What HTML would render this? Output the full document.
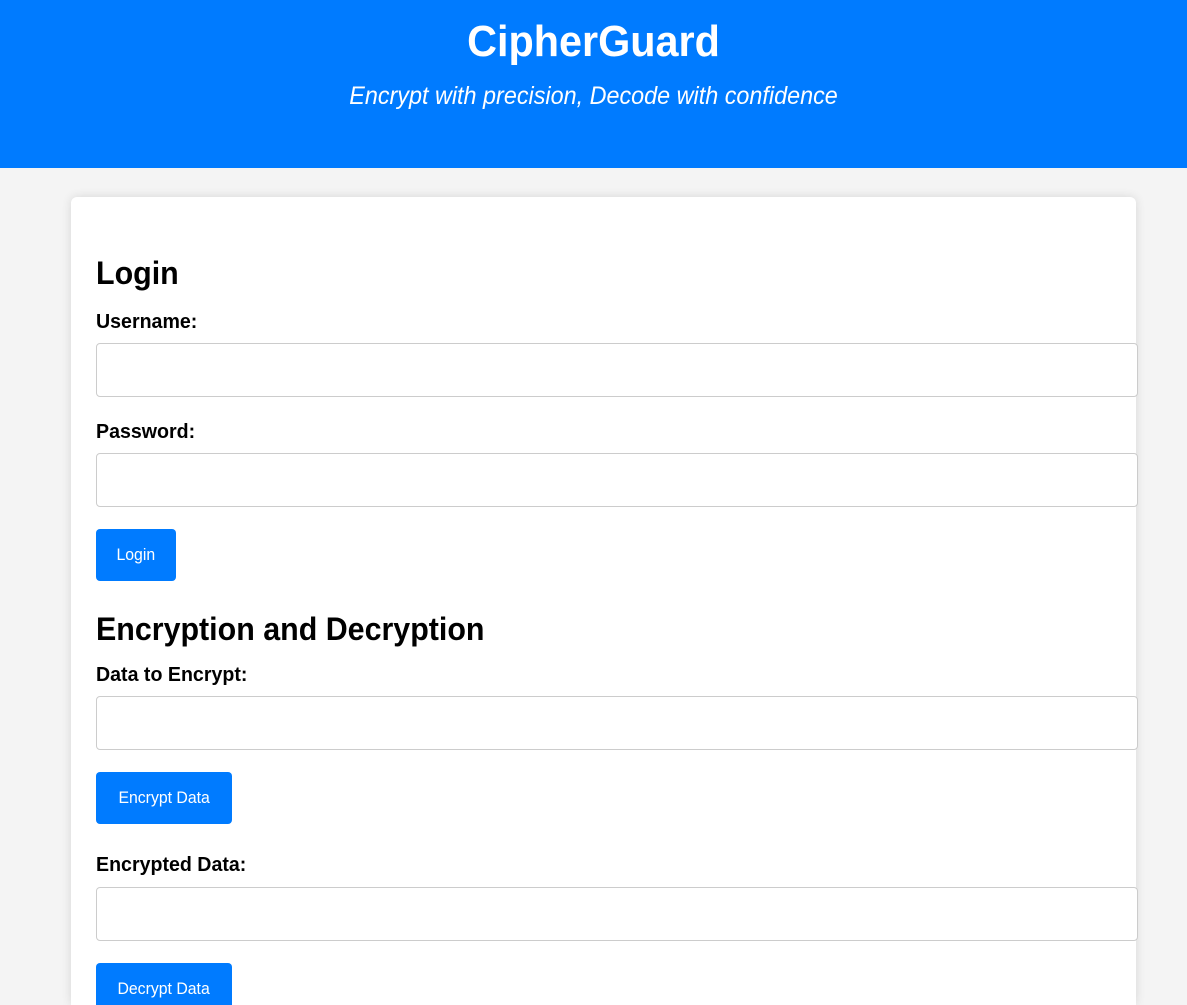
<!DOCTYPE html>
<html style="height:1005px;overflow:hidden"><head><meta charset="utf-8"><style>
body{margin:0;background:#f4f4f4;font-family:"Liberation Sans",Arial,sans-serif;width:1187px;height:1005px;overflow:hidden;position:relative}
.hdr{position:absolute;left:0;top:0;width:1187px;height:168px;background:#007bff;color:#fff;text-align:center}
.hdr h1{position:absolute;left:0;right:0;top:17px;margin:0;font-size:44px;font-weight:bold;transform:scaleX(0.94)}
.hdr p{position:absolute;left:0;right:0;top:82px;margin:0;font-size:25px;font-style:italic;transform:scaleX(0.935)}
.card{position:absolute;left:71px;top:197px;width:1065px;height:808px;background:#fff;border-radius:6px 6px 0 0;box-shadow:0 0 10px rgba(0,0,0,.12)}
.a{position:absolute;left:96px;margin:0;color:#000;transform:scaleX(0.95);transform-origin:0 0;white-space:nowrap}
h2.a{font-size:32px;font-weight:bold}
.l{font-size:20px;font-weight:bold;transform:scaleX(0.98)}
.i{position:absolute;left:96px;width:1040px;height:52px;border:1px solid #ccc;border-radius:4px;background:#fff}
.b{position:absolute;left:96px;height:52px;background:#007bff;color:#fff;border-radius:4px;font-size:17px;line-height:52px;text-align:center}
.b span{display:inline-block;transform:scaleX(0.93)}
</style></head><body>
<div class="hdr"><h1>CipherGuard</h1><p>Encrypt with precision, Decode with confidence</p></div>
<div class="card"></div>
<h2 class="a" style="top:255px">Login</h2>
<div class="a l" style="top:311px">Username:</div>
<div class="i" style="top:343px"></div>
<div class="a l" style="top:421px">Password:</div>
<div class="i" style="top:453px"></div>
<div class="b" style="top:529px;width:80px"><span>Login</span></div>
<h2 class="a" style="top:611px">Encryption and Decryption</h2>
<div class="a l" style="top:664px">Data to Encrypt:</div>
<div class="i" style="top:696px"></div>
<div class="b" style="top:772px;width:136px"><span>Encrypt Data</span></div>
<div class="a l" style="top:854px">Encrypted Data:</div>
<div class="i" style="top:887px"></div>
<div class="b" style="top:963px;width:136px;height:42px;border-radius:4px 4px 0 0"><span>Decrypt Data</span></div>
</body></html>
